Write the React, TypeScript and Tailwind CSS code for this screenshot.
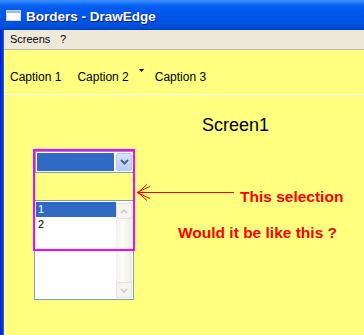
export default function App() {
  return (
    <div className="w-[364px] h-[335px] overflow-hidden flex flex-col bg-[#FFFF80] font-['Liberation_Sans',Arial,sans-serif]">
      {/* title bar */}
      <div className="h-[30px] shrink-0 flex items-start bg-[linear-gradient(to_bottom,#3D8EF7_0px,#2A83FE_2px,#0A62F0_5px,#0058EE_10px,#0054E3_20px,#0050DD_26px,#0045CF_29px,#003BB8_30px)]">
        <svg className="ml-[6px] mt-[10px] shrink-0" width="15" height="11" viewBox="0 0 15 11">
          <rect x="0.5" y="0.5" width="14" height="10" fill="#FFFFFF" stroke="#C9D6EE" />
          <rect x="1" y="1" width="13" height="2" fill="#9FB6E2" />
        </svg>
        <span className="ml-[5px] mt-[9px] text-white font-bold text-[13.5px] leading-[16px] whitespace-nowrap [text-shadow:1px_1px_0_#0A1E8C]">
          Borders - DrawEdge
        </span>
      </div>
      <div className="flex-1 flex min-h-0">
        <div className="w-[4px] shrink-0 bg-[linear-gradient(to_right,#0022B8_0px,#0022B8_1px,#0831D9_1px,#0831D9_3px,#1660E8_3px)]" />
        <div className="flex-1 flex flex-col min-w-0">
          {/* menu bar */}
          <div className="h-[20px] shrink-0 bg-[#ECE9D8] border-b border-[#BDBAAE] flex items-start pl-[6px] pt-[3px] text-[11px] leading-[13px] text-black">
            <span className="w-[50px]">Screens</span>
            <span>?</span>
          </div>
          {/* captions */}
          <div className="h-[45px] shrink-0 border-b border-white flex items-start pl-[6px] pt-[20px] text-[12px] leading-[14px] text-black">
            <span className="whitespace-nowrap">Caption 1</span>
            <span className="ml-[16px] whitespace-nowrap">Caption 2</span>
            <svg className="ml-[10px] mt-[-1px] shrink-0" width="5" height="3" viewBox="0 0 5 3">
              <polygon points="0,0 5,0 2.5,3" fill="#000000" />
            </svg>
            <span className="ml-[11px] whitespace-nowrap">Caption 3</span>
          </div>
          {/* lower */}
          <div className="flex-1 flex flex-col min-h-0">
            <div className="mt-[20px] ml-[198px] text-[18px] leading-[20px] text-black whitespace-nowrap">Screen1</div>
            <div className="relative mt-[16px] flex items-start">
              <div className="ml-[31px] flex flex-col shrink-0">
                {/* combo */}
                <div className="w-[99px] h-[22px] border border-[#7F9DB9] bg-white p-[1px] flex">
                  <div className="w-[78px] h-[18px] bg-[#316AC5]" />
                  <div className="ml-[2px] w-[16px] h-[18px] rounded-[2px] border border-[#B4C8F6] bg-[linear-gradient(to_bottom,#D6E2FD,#BACDF8)] flex items-center justify-center">
                    <svg width="9" height="6" viewBox="0 0 9 6">
                      <polyline points="1,1 4.5,4.5 8,1" fill="none" stroke="#4D6185" strokeWidth="2" />
                    </svg>
                  </div>
                </div>
                {/* listbox */}
                <div className="mt-[27px] -ml-[1px] w-[100px] h-[100px] border border-[#7F9DB9] bg-white p-[1px] flex text-[11px] leading-[15px]">
                  <div className="w-[80px] flex flex-col">
                    <div className="h-[15px] bg-[#316AC5] text-white pl-[2px]">1</div>
                    <div className="h-[15px] text-black pl-[2px]">2</div>
                  </div>
                  <div className="w-[16px] h-full flex flex-col justify-between bg-[linear-gradient(to_right,#F3F1EB,#FCFCF9_40%,#EEEDE6)]">
                    <div className="w-[16px] h-[16px] mt-[1px] rounded-[2px] border border-[#E4E3DB] bg-[#F5F4EF] flex items-center justify-center">
                      <svg width="8" height="5" viewBox="0 0 8 5">
                        <polyline points="1,4 4,1 7,4" fill="none" stroke="#CBCAC2" strokeWidth="1.6" />
                      </svg>
                    </div>
                    <div className="w-[16px] h-[16px] rounded-[2px] border border-[#E4E3DB] bg-[#F5F4EF] flex items-center justify-center">
                      <svg width="8" height="5" viewBox="0 0 8 5">
                        <polyline points="1,1 4,4 7,1" fill="none" stroke="#CBCAC2" strokeWidth="1.6" />
                      </svg>
                    </div>
                  </div>
                </div>
              </div>
              <div className="flex flex-col shrink-0 text-[#FF0000] font-bold text-[15.5px] leading-[18px] whitespace-nowrap">
                <div className="mt-[37px] ml-[106px]">This selection</div>
                <div className="mt-[18px] ml-[44px]">Would it be like this ?</div>
              </div>
              {/* magenta highlight */}
              <div className="absolute left-[29px] top-[-2px] w-[102px] h-[102px] border-2 border-[#FF00FF] pointer-events-none" />
              {/* arrow */}
              <svg className="absolute left-[126px] top-[30px]" width="104" height="24" viewBox="0 0 104 24">
                <line x1="7" y1="11.5" x2="104" y2="11.5" stroke="#FF0000" strokeWidth="1" />
                <polyline points="20,5.5 7,11.5 20,17.5" fill="none" stroke="#FF0000" strokeWidth="1" />
                <polyline points="17,3.5 8,11.5 17,19.5" fill="none" stroke="#FF0000" strokeWidth="1" />
              </svg>
            </div>
          </div>
        </div>
      </div>
    </div>
  );
}
